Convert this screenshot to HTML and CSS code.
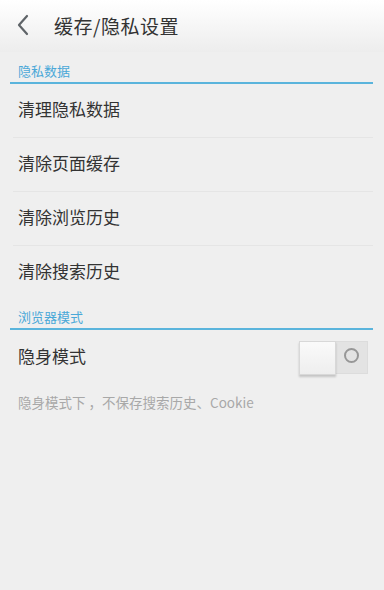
FILE: index.html
```html
<!DOCTYPE html>
<html lang="zh">
<head>
<meta charset="utf-8">
<link rel="stylesheet" href="styles.css">
</head>
<body>
<div class="app">
  <header class="bar">
    <svg class="back" width="14" height="22" viewBox="0 0 14 22"><path d="M11 2 L3 11 L11 20" fill="none" stroke="#5f6468" stroke-width="2.2" stroke-linecap="round" stroke-linejoin="round"/></svg>
    <h1 class="title">缓存/隐私设置</h1>
  </header>

  <section class="group">
    <div class="group-head">隐私数据</div>
    <div class="row">清理隐私数据</div>
    <div class="row">清除页面缓存</div>
    <div class="row">清除浏览历史</div>
    <div class="row last">清除搜索历史</div>
  </section>

  <section class="group second">
    <div class="group-head">浏览器模式</div>
    <div class="row toggle-row">
      <span>隐身模式</span>
      <div class="switch">
        <div class="knob"></div>
        <div class="off"><span class="ring"></span></div>
      </div>
    </div>
    <p class="hint">隐身模式下 ，不保存搜索历史、Cookie</p>
  </section>
</div>
</body>
</html>
```
FILE: styles.css
```css
html, body {
  margin: 0;
  padding: 0;
  background: #efefef;
}
body {
  font-family: "Noto Sans CJK SC", "Noto Sans", sans-serif;
  color: #333;
}
.app {
  width: 384px;
  height: 590px;
  background: #efefef;
}
.bar {
  height: 52px;
  display: flex;
  align-items: center;
  background: linear-gradient(#ffffff, #ededed);
}
.back {
  margin-left: 16px;
  margin-right: 24px;
  margin-top: -2px;
}
.title {
  margin: -2px 0 0 0;
  font-size: 19px;
  font-weight: normal;
  color: #333;
  letter-spacing: 0.5px;
}
.group {
  padding: 0 11px 0 10px;
}
.group-head {
  margin-top: 10px;
  padding: 0 0 0 8px;
  height: 20px;
  line-height: 18px;
  font-size: 13px;
  color: #4aa8d8;
  border-bottom: 2px solid #5ab4dc;
}
.row {
  height: 53px;
  line-height: 50px;
  font-size: 17px;
  color: #333;
  border-bottom: 1px solid #e5e5e5;
  margin-left: 3px;
  padding-left: 5px;
}
.row.last {
  border-bottom: none;
}
.second .group-head {
  margin-top: 9px;
}
.toggle-row {
  display: flex;
  align-items: center;
  justify-content: space-between;
  border-bottom: none;
  height: 54px;
}
.toggle-row span {
  margin-top: -3px;
}
.switch {
  display: flex;
  width: 69px;
  height: 33px;
  margin-right: 5px;
  background: #e3e3e3;
  border: 1px solid #dcdcdc;
  box-sizing: border-box;
}
.knob {
  width: 37px;
  height: 34px;
  margin-top: -1px;
  margin-left: -1px;
  background: linear-gradient(#fafafa, #eeeeee);
  border: 1px solid #d8d8d8;
  box-shadow: 0 2px 2px rgba(0,0,0,0.18);
  box-sizing: border-box;
}
.off {
  flex: 1;
  display: flex;
  align-items: center;
  justify-content: center;
}
.ring {
  width: 11px;
  height: 11px;
  border: 2px solid #979797;
  border-radius: 50%;
}
.hint {
  margin: 8px 0 0 8px;
  font-size: 13.5px;
  color: #a8a8a8;
  font-family: "Noto Sans CJK SC", Roboto, sans-serif;
}
```
